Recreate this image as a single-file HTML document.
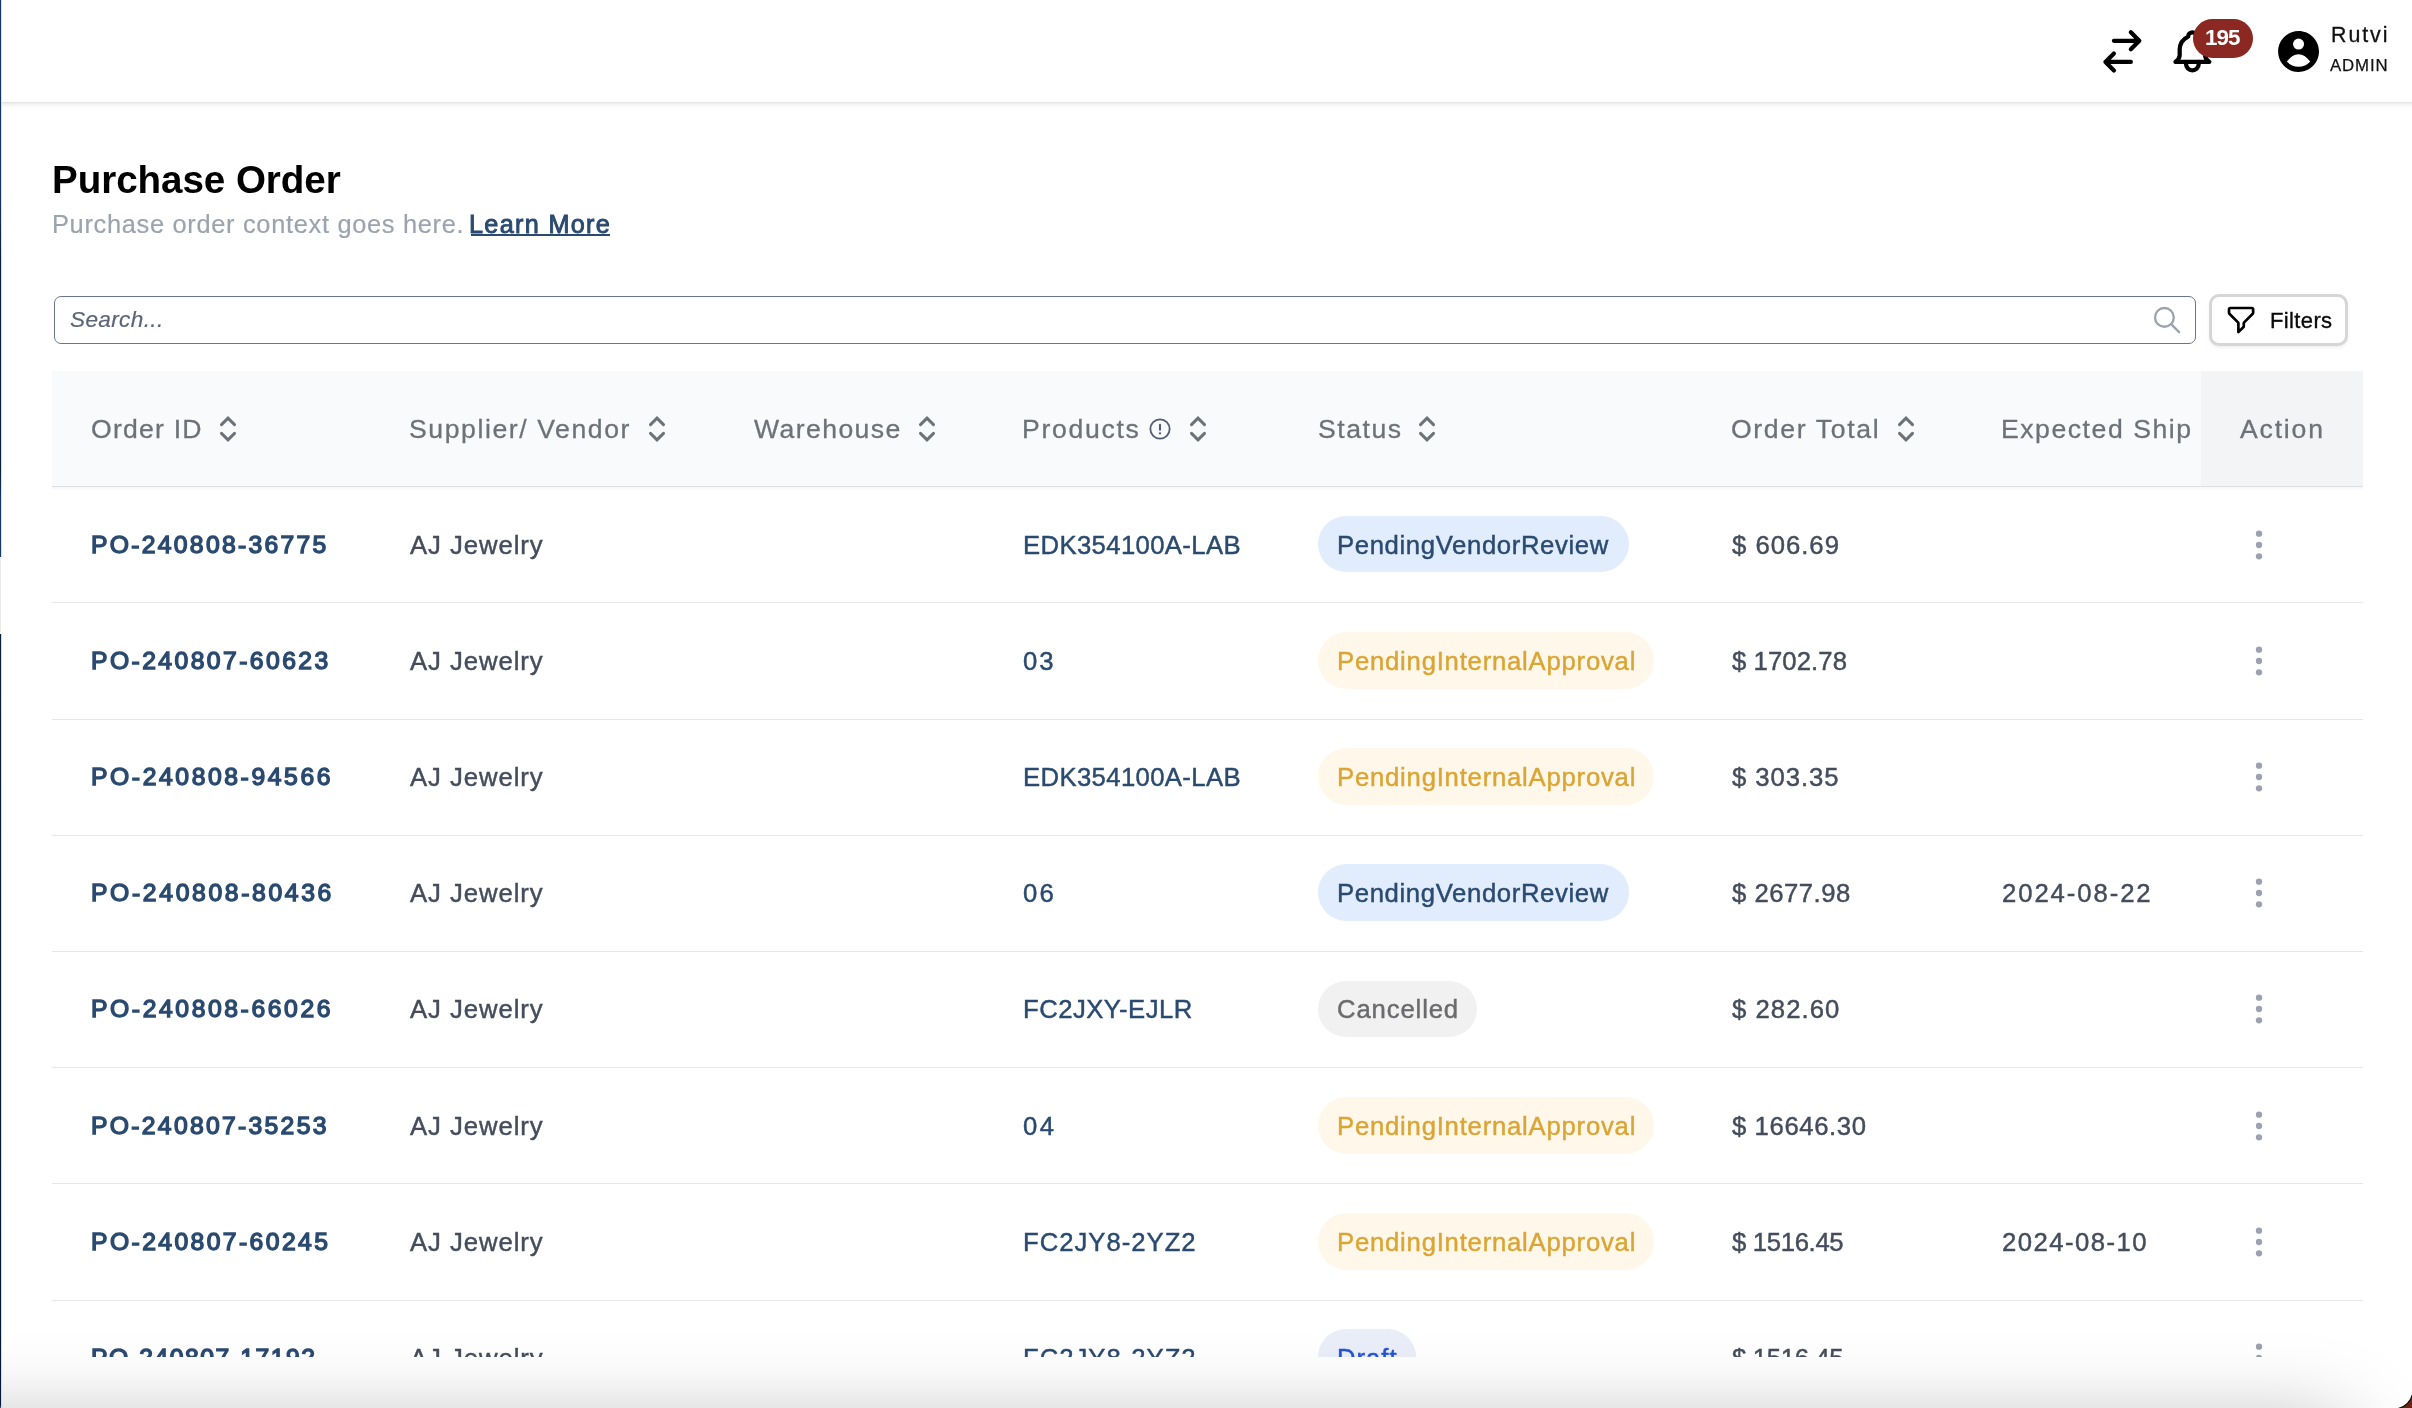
<!DOCTYPE html>
<html lang="en">
<head>
<meta charset="utf-8">
<meta name="viewport" content="width=2412">
<title>Purchase Order</title>
<style>
html,body{margin:0;padding:0;}
html{width:2412px;height:1408px;overflow:hidden;}
body{width:2412px;height:1408px;overflow:hidden;background:#fff;position:relative;font-family:"Liberation Sans",sans-serif;}
.t{position:absolute;white-space:nowrap;margin:0;padding:0;font-weight:400;display:block;will-change:transform;}
.abs{position:absolute;}
svg{position:absolute;overflow:visible;}
a.t{text-decoration:none;}
.chip{position:absolute;border-radius:40px;}
.line{position:absolute;left:52px;width:2311px;height:1px;background:#e5e7eb;}
.viewport{position:absolute;left:0;top:0;width:2412px;height:1357px;overflow:hidden;}
</style>
</head>
<body>
<aside aria-label="Sidebar">
<div class="abs" style="left:0;top:0;width:1.15px;height:1408px;background:linear-gradient(to bottom,#15365f 0,#15365f 200px,#0a1f40 260px,#0a1f40 470px,#173a63 500px,#173a63 557px,#fff 557px,#fff 558px,#e9e9e9 558px,#e9e9e9 633px,#fff 633px,#fff 634px,#0b1f40 634px,#06193a 1406px,#3a4a62 1406px);"></div>
<div class="abs" style="left:1px;top:0;width:1px;height:1408px;opacity:.16;background:linear-gradient(to bottom,#15365f 0,#15365f 557px,transparent 557px,transparent 634px,#0b1f40 634px,#06193a 1408px);"></div>
</aside>
<div class="viewport">
<header>
<div class="abs" style="left:2px;top:0;width:2410px;height:102px;background:#fff;"></div>
<div class="abs" style="left:2px;top:102px;width:2410px;height:8px;background:linear-gradient(to bottom,rgba(0,0,0,.125) 0,rgba(0,0,0,.06) 22%,rgba(0,0,0,.022) 50%,rgba(0,0,0,0) 90%);"></div>
<!-- switch account -->
<svg style="left:2096.8px;top:25.9px;" width="50.76" height="50.76" viewBox="0 0 24 24" fill="none" stroke="#000" stroke-width="2" stroke-linecap="round" stroke-linejoin="round"><path d="M8 7h12m0 0l-4-4m4 4l-4 4m0 6H4m0 0l4 4m-4-4l4-4"/></svg>
<!-- notifications -->
<svg style="left:2167.4px;top:26.0px;" width="50.76" height="50.76" viewBox="0 0 24 24" fill="none" stroke="#000" stroke-width="2" stroke-linecap="round" stroke-linejoin="round"><path d="M10 5a2 2 0 1 1 4 0a7 7 0 0 1 4 6v3a4 4 0 0 0 2 3h-16a4 4 0 0 0 2 -3v-3a7 7 0 0 1 4 -6"/><path d="M9 17v1a3 3 0 0 0 6 0v-1"/></svg>
<div class="abs" style="left:2193.2px;top:18.7px;width:59.7px;height:39.4px;border-radius:20px;background:#8c2822;"></div>
<span class="t" style="left:2205.00px;top:27.14px;font-size:22.4px;line-height:22.4px;letter-spacing:-0.953px;color:#fff;font-weight:700;">195</span>
<!-- user -->
<svg style="left:2273.96px;top:26.76px;" width="49.08" height="49.08" viewBox="0 0 24 24" fill="#000" fill-rule="evenodd"><path d="M12 2C6.48 2 2 6.48 2 12s4.48 10 10 10 10-4.48 10-10S17.52 2 12 2zM12 5.65a2.7 2.7 0 1 1 0 5.4a2.7 2.7 0 1 1 0-5.4zM6.3 16.87Q9 13.3 12 13.3Q15 13.3 17.7 16.87A7.5 7.5 0 0 1 6.3 16.87z"/></svg>
<span class="t" style="left:2331.05px;top:25.33px;font-size:21.4px;line-height:21.4px;letter-spacing:1.929px;color:#111;-webkit-text-stroke:0.3px #111;">Rutvi</span>
<span class="t" style="left:2330.32px;top:58.15px;font-size:16.8px;line-height:16.8px;letter-spacing:0.874px;color:#111;-webkit-text-stroke:0.25px #111;">ADMIN</span>
</header>
<main>
<section>
<h1 class="t" style="left:52.30px;top:160.63px;font-size:38.6px;line-height:38.6px;letter-spacing:-0.058px;color:#000;font-weight:700;">Purchase Order</h1>
<p class="t" style="left:51.90px;top:212.00px;font-size:25.4px;line-height:25.4px;letter-spacing:0.688px;color:#9ca3af;-webkit-text-stroke:0.2px #9ca3af;">Purchase order context goes here.</p>
<a class="t" style="left:469.15px;top:212.02px;font-size:25.2px;line-height:25.2px;letter-spacing:1.334px;color:#2a4a70;-webkit-text-stroke:0.9px #2a4a70;">Learn More</a>
<div class="abs" style="left:470.5px;top:234.3px;width:139px;height:2.2px;background:#2a4a70;"></div>
</section>
<div role="search">
<div class="abs" style="left:54px;top:296px;width:2140px;height:46px;border:1px solid #6b7489;border-radius:7px;background:#fff;"></div>
<span class="t" style="left:69.80px;top:309.47px;font-size:22.6px;line-height:22.6px;letter-spacing:0.345px;color:#5b6477;font-style:italic;-webkit-text-stroke:0.2px #5b6477;">Search...</span>
<svg style="left:2150.9px;top:303.5px;" width="32.16" height="32.16" viewBox="0 0 24 24" fill="none" stroke="#9ca3af" stroke-width="1.75" stroke-linecap="round" stroke-linejoin="round"><path d="M21 21l-6-6m2-5a7 7 0 11-14 0 7 7 0 0114 0z"/></svg>
</div>
<div role="button">
<div class="abs" style="left:2209px;top:294px;width:133px;height:46px;border:3px solid #d6d6d6;border-radius:10px;background:#fff;box-shadow:0 2px 3px rgba(0,0,0,.06);"></div>
<svg style="left:2224.9px;top:303.9px;" width="32.16" height="32.16" viewBox="0 0 24 24" fill="none" stroke="#000" stroke-width="2" stroke-linecap="round" stroke-linejoin="round"><path d="M3 4a1 1 0 011-1h16a1 1 0 011 1v2.586a1 1 0 01-.293.707l-6.414 6.414a1 1 0 00-.293.707V17l-4 4v-6.586a1 1 0 00-.293-.707L3.293 7.293A1 1 0 013 6.586V4z"/></svg>
<span class="t" style="left:2269.90px;top:309.78px;font-size:22.0px;line-height:22.0px;letter-spacing:0.369px;color:#0a0a0a;-webkit-text-stroke:0.35px #0a0a0a;">Filters</span>
</div>
<div role="table">
<div role="row">
<div class="abs" style="left:52px;top:371px;width:2311px;height:115px;background:#f9fafb;"></div>
<div class="abs" style="left:2201px;top:371px;width:162px;height:115px;background:#f3f4f6;"></div>
<div class="line" style="top:486px;background:#dcdfe4;"></div>
<div class="abs" style="left:52px;top:487px;width:2311px;height:4px;background:linear-gradient(to bottom,rgba(0,0,0,.03),rgba(0,0,0,0));"></div>
<span class="t" style="left:90.70px;top:416.28px;font-size:26.6px;line-height:26.6px;letter-spacing:1.221px;color:#6d7278;-webkit-text-stroke:0.3px #6d7278;">Order ID</span>
<svg style="left:218.20px;top:415.00px;" width="20" height="28" viewBox="-10 -14 20 28" fill="none" stroke="#6d7278" stroke-width="3" stroke-linecap="round" stroke-linejoin="miter"><path d="M-6.5 -4.4L0 -10.9L6.5 -4.4M-6.5 4.4L0 10.9L6.5 4.4"/></svg>
<span class="t" style="left:408.90px;top:416.28px;font-size:26.6px;line-height:26.6px;letter-spacing:1.588px;color:#6d7278;-webkit-text-stroke:0.3px #6d7278;">Supplier/ Vendor</span>
<svg style="left:647.20px;top:415.00px;" width="20" height="28" viewBox="-10 -14 20 28" fill="none" stroke="#6d7278" stroke-width="3" stroke-linecap="round" stroke-linejoin="miter"><path d="M-6.5 -4.4L0 -10.9L6.5 -4.4M-6.5 4.4L0 10.9L6.5 4.4"/></svg>
<span class="t" style="left:754.10px;top:416.28px;font-size:26.6px;line-height:26.6px;letter-spacing:1.410px;color:#6d7278;-webkit-text-stroke:0.3px #6d7278;">Warehouse</span>
<svg style="left:917.10px;top:415.00px;" width="20" height="28" viewBox="-10 -14 20 28" fill="none" stroke="#6d7278" stroke-width="3" stroke-linecap="round" stroke-linejoin="miter"><path d="M-6.5 -4.4L0 -10.9L6.5 -4.4M-6.5 4.4L0 10.9L6.5 4.4"/></svg>
<span class="t" style="left:1022.40px;top:416.28px;font-size:26.6px;line-height:26.6px;letter-spacing:1.707px;color:#6d7278;-webkit-text-stroke:0.3px #6d7278;">Products</span>
<svg style="left:1147.7px;top:416.65px;" width="24" height="24" viewBox="-12 -12 24 24" fill="none" stroke="#555d75" stroke-linecap="round"><circle cx="0" cy="0" r="9.65" stroke-width="1.8"/><path d="M0 -4.3V0.7" stroke-width="2.1"/><path d="M0 4.3V4.4" stroke-width="2.3"/></svg>
<svg style="left:1188.10px;top:415.00px;" width="20" height="28" viewBox="-10 -14 20 28" fill="none" stroke="#6d7278" stroke-width="3" stroke-linecap="round" stroke-linejoin="miter"><path d="M-6.5 -4.4L0 -10.9L6.5 -4.4M-6.5 4.4L0 10.9L6.5 4.4"/></svg>
<span class="t" style="left:1317.60px;top:416.28px;font-size:26.6px;line-height:26.6px;letter-spacing:1.541px;color:#6d7278;-webkit-text-stroke:0.3px #6d7278;">Status</span>
<svg style="left:1417.10px;top:415.00px;" width="20" height="28" viewBox="-10 -14 20 28" fill="none" stroke="#6d7278" stroke-width="3" stroke-linecap="round" stroke-linejoin="miter"><path d="M-6.5 -4.4L0 -10.9L6.5 -4.4M-6.5 4.4L0 10.9L6.5 4.4"/></svg>
<span class="t" style="left:1730.80px;top:416.28px;font-size:26.6px;line-height:26.6px;letter-spacing:1.657px;color:#6d7278;-webkit-text-stroke:0.3px #6d7278;">Order Total</span>
<svg style="left:1896.10px;top:415.00px;" width="20" height="28" viewBox="-10 -14 20 28" fill="none" stroke="#6d7278" stroke-width="3" stroke-linecap="round" stroke-linejoin="miter"><path d="M-6.5 -4.4L0 -10.9L6.5 -4.4M-6.5 4.4L0 10.9L6.5 4.4"/></svg>
<span class="t" style="left:2001.30px;top:416.28px;font-size:26.6px;line-height:26.6px;letter-spacing:1.541px;color:#6d7278;-webkit-text-stroke:0.3px #6d7278;">Expected Ship</span>
<span class="t" style="left:2240.30px;top:416.28px;font-size:26.6px;line-height:26.6px;letter-spacing:1.816px;color:#6d7278;-webkit-text-stroke:0.3px #6d7278;">Action</span>
</div>
<div role="row">
<div class="chip" style="left:1317.9px;top:515.80px;width:311.2px;height:56.5px;background:#e1edfc;"></div>
<span class="t" style="left:90.60px;top:532.99px;font-size:24.7px;line-height:24.7px;letter-spacing:2.299px;color:#2a4a70;-webkit-text-stroke:1.4px #2a4a70;">PO-240808-36775</span>
<span class="t" style="left:409.53px;top:532.97px;font-size:25.7px;line-height:25.7px;letter-spacing:0.945px;color:#444d5c;-webkit-text-stroke:0.45px #444d5c;">AJ Jewelry</span>
<span class="t" style="left:1022.72px;top:532.97px;font-size:25.7px;line-height:25.7px;letter-spacing:0.370px;color:#2a4a70;-webkit-text-stroke:0.45px #2a4a70;">EDK354100A-LAB</span>
<span class="t" style="left:1336.72px;top:532.97px;font-size:25.7px;line-height:25.7px;letter-spacing:0.633px;color:#2a4a70;-webkit-text-stroke:0.45px #2a4a70;">PendingVendorReview</span>
<span class="t" style="left:1732.42px;top:532.97px;font-size:25.7px;line-height:25.7px;letter-spacing:0.992px;color:#444d5c;-webkit-text-stroke:0.45px #444d5c;">$ 606.69</span>
<svg style="left:2253.2px;top:528.55px;" width="12" height="32" viewBox="-6 -16 12 32" fill="#9ba1b0"><circle cx="0" cy="-11.3" r="3.15"/><circle cx="0" cy="0" r="3.15"/><circle cx="0" cy="11.3" r="3.15"/></svg>
<div class="line" style="top:602px;"></div>
</div>
<div role="row">
<div class="chip" style="left:1317.9px;top:632.00px;width:336.1px;height:56.5px;background:#fff8ea;"></div>
<span class="t" style="left:90.60px;top:648.99px;font-size:24.7px;line-height:24.7px;letter-spacing:2.435px;color:#2a4a70;-webkit-text-stroke:1.4px #2a4a70;">PO-240807-60623</span>
<span class="t" style="left:409.53px;top:648.97px;font-size:25.7px;line-height:25.7px;letter-spacing:0.945px;color:#444d5c;-webkit-text-stroke:0.45px #444d5c;">AJ Jewelry</span>
<span class="t" style="left:1023.22px;top:648.97px;font-size:25.7px;line-height:25.7px;letter-spacing:1.964px;color:#2a4a70;-webkit-text-stroke:0.45px #2a4a70;">03</span>
<span class="t" style="left:1336.72px;top:648.97px;font-size:25.7px;line-height:25.7px;letter-spacing:0.774px;color:#dba535;-webkit-text-stroke:0.45px #dba535;">PendingInternalApproval</span>
<span class="t" style="left:1732.42px;top:648.97px;font-size:25.7px;line-height:25.7px;letter-spacing:0.082px;color:#444d5c;-webkit-text-stroke:0.45px #444d5c;">$ 1702.78</span>
<svg style="left:2253.2px;top:644.55px;" width="12" height="32" viewBox="-6 -16 12 32" fill="#9ba1b0"><circle cx="0" cy="-11.3" r="3.15"/><circle cx="0" cy="0" r="3.15"/><circle cx="0" cy="11.3" r="3.15"/></svg>
<div class="line" style="top:719px;"></div>
</div>
<div role="row">
<div class="chip" style="left:1317.9px;top:748.00px;width:336.1px;height:56.5px;background:#fff8ea;"></div>
<span class="t" style="left:90.60px;top:764.99px;font-size:24.7px;line-height:24.7px;letter-spacing:2.592px;color:#2a4a70;-webkit-text-stroke:1.4px #2a4a70;">PO-240808-94566</span>
<span class="t" style="left:409.53px;top:764.97px;font-size:25.7px;line-height:25.7px;letter-spacing:0.945px;color:#444d5c;-webkit-text-stroke:0.45px #444d5c;">AJ Jewelry</span>
<span class="t" style="left:1022.72px;top:764.97px;font-size:25.7px;line-height:25.7px;letter-spacing:0.370px;color:#2a4a70;-webkit-text-stroke:0.45px #2a4a70;">EDK354100A-LAB</span>
<span class="t" style="left:1336.72px;top:764.97px;font-size:25.7px;line-height:25.7px;letter-spacing:0.774px;color:#dba535;-webkit-text-stroke:0.45px #dba535;">PendingInternalApproval</span>
<span class="t" style="left:1732.42px;top:764.97px;font-size:25.7px;line-height:25.7px;letter-spacing:0.921px;color:#444d5c;-webkit-text-stroke:0.45px #444d5c;">$ 303.35</span>
<svg style="left:2253.2px;top:760.55px;" width="12" height="32" viewBox="-6 -16 12 32" fill="#9ba1b0"><circle cx="0" cy="-11.3" r="3.15"/><circle cx="0" cy="0" r="3.15"/><circle cx="0" cy="11.3" r="3.15"/></svg>
<div class="line" style="top:835px;"></div>
</div>
<div role="row">
<div class="chip" style="left:1317.9px;top:864.00px;width:311.2px;height:56.5px;background:#e1edfc;"></div>
<span class="t" style="left:90.60px;top:880.99px;font-size:24.7px;line-height:24.7px;letter-spacing:2.656px;color:#2a4a70;-webkit-text-stroke:1.4px #2a4a70;">PO-240808-80436</span>
<span class="t" style="left:409.53px;top:880.97px;font-size:25.7px;line-height:25.7px;letter-spacing:0.945px;color:#444d5c;-webkit-text-stroke:0.45px #444d5c;">AJ Jewelry</span>
<span class="t" style="left:1023.22px;top:880.97px;font-size:25.7px;line-height:25.7px;letter-spacing:2.264px;color:#2a4a70;-webkit-text-stroke:0.45px #2a4a70;">06</span>
<span class="t" style="left:1336.72px;top:880.97px;font-size:25.7px;line-height:25.7px;letter-spacing:0.633px;color:#2a4a70;-webkit-text-stroke:0.45px #2a4a70;">PendingVendorReview</span>
<span class="t" style="left:1732.42px;top:880.97px;font-size:25.7px;line-height:25.7px;letter-spacing:0.495px;color:#444d5c;-webkit-text-stroke:0.45px #444d5c;">$ 2677.98</span>
<span class="t" style="left:2002.22px;top:880.97px;font-size:25.7px;line-height:25.7px;letter-spacing:1.915px;color:#444d5c;-webkit-text-stroke:0.45px #444d5c;">2024-08-22</span>
<svg style="left:2253.2px;top:876.55px;" width="12" height="32" viewBox="-6 -16 12 32" fill="#9ba1b0"><circle cx="0" cy="-11.3" r="3.15"/><circle cx="0" cy="0" r="3.15"/><circle cx="0" cy="11.3" r="3.15"/></svg>
<div class="line" style="top:951px;"></div>
</div>
<div role="row">
<div class="chip" style="left:1317.9px;top:980.90px;width:158.7px;height:56.5px;background:#f1f1f1;"></div>
<span class="t" style="left:90.60px;top:996.99px;font-size:24.7px;line-height:24.7px;letter-spacing:2.592px;color:#2a4a70;-webkit-text-stroke:1.4px #2a4a70;">PO-240808-66026</span>
<span class="t" style="left:409.53px;top:996.97px;font-size:25.7px;line-height:25.7px;letter-spacing:0.945px;color:#444d5c;-webkit-text-stroke:0.45px #444d5c;">AJ Jewelry</span>
<span class="t" style="left:1022.72px;top:996.97px;font-size:25.7px;line-height:25.7px;letter-spacing:0.465px;color:#2a4a70;-webkit-text-stroke:0.45px #2a4a70;">FC2JXY-EJLR</span>
<span class="t" style="left:1337.12px;top:996.97px;font-size:25.7px;line-height:25.7px;letter-spacing:0.862px;color:#6a6b6d;-webkit-text-stroke:0.45px #6a6b6d;">Cancelled</span>
<span class="t" style="left:1732.42px;top:996.97px;font-size:25.7px;line-height:25.7px;letter-spacing:1.035px;color:#444d5c;-webkit-text-stroke:0.45px #444d5c;">$ 282.60</span>
<svg style="left:2253.2px;top:992.55px;" width="12" height="32" viewBox="-6 -16 12 32" fill="#9ba1b0"><circle cx="0" cy="-11.3" r="3.15"/><circle cx="0" cy="0" r="3.15"/><circle cx="0" cy="11.3" r="3.15"/></svg>
<div class="line" style="top:1067px;"></div>
</div>
<div role="row">
<div class="chip" style="left:1317.9px;top:1097.00px;width:336.1px;height:56.5px;background:#fff8ea;"></div>
<span class="t" style="left:90.60px;top:1113.99px;font-size:24.7px;line-height:24.7px;letter-spacing:2.306px;color:#2a4a70;-webkit-text-stroke:1.4px #2a4a70;">PO-240807-35253</span>
<span class="t" style="left:409.53px;top:1113.97px;font-size:25.7px;line-height:25.7px;letter-spacing:0.945px;color:#444d5c;-webkit-text-stroke:0.45px #444d5c;">AJ Jewelry</span>
<span class="t" style="left:1023.22px;top:1113.97px;font-size:25.7px;line-height:25.7px;letter-spacing:2.464px;color:#2a4a70;-webkit-text-stroke:0.45px #2a4a70;">04</span>
<span class="t" style="left:1336.72px;top:1113.97px;font-size:25.7px;line-height:25.7px;letter-spacing:0.774px;color:#dba535;-webkit-text-stroke:0.45px #dba535;">PendingInternalApproval</span>
<span class="t" style="left:1732.42px;top:1113.97px;font-size:25.7px;line-height:25.7px;letter-spacing:0.597px;color:#444d5c;-webkit-text-stroke:0.45px #444d5c;">$ 16646.30</span>
<svg style="left:2253.2px;top:1109.55px;" width="12" height="32" viewBox="-6 -16 12 32" fill="#9ba1b0"><circle cx="0" cy="-11.3" r="3.15"/><circle cx="0" cy="0" r="3.15"/><circle cx="0" cy="11.3" r="3.15"/></svg>
<div class="line" style="top:1183px;"></div>
</div>
<div role="row">
<div class="chip" style="left:1317.9px;top:1213.00px;width:336.1px;height:56.5px;background:#fff8ea;"></div>
<span class="t" style="left:90.60px;top:1229.99px;font-size:24.7px;line-height:24.7px;letter-spacing:2.413px;color:#2a4a70;-webkit-text-stroke:1.4px #2a4a70;">PO-240807-60245</span>
<span class="t" style="left:409.53px;top:1229.97px;font-size:25.7px;line-height:25.7px;letter-spacing:0.945px;color:#444d5c;-webkit-text-stroke:0.45px #444d5c;">AJ Jewelry</span>
<span class="t" style="left:1022.72px;top:1229.97px;font-size:25.7px;line-height:25.7px;letter-spacing:0.989px;color:#2a4a70;-webkit-text-stroke:0.45px #2a4a70;">FC2JY8-2YZ2</span>
<span class="t" style="left:1336.72px;top:1229.97px;font-size:25.7px;line-height:25.7px;letter-spacing:0.774px;color:#dba535;-webkit-text-stroke:0.45px #dba535;">PendingInternalApproval</span>
<span class="t" style="left:1732.42px;top:1229.97px;font-size:25.7px;line-height:25.7px;letter-spacing:-0.330px;color:#444d5c;-webkit-text-stroke:0.45px #444d5c;">$ 1516.45</span>
<span class="t" style="left:2002.22px;top:1229.97px;font-size:25.7px;line-height:25.7px;letter-spacing:1.460px;color:#444d5c;-webkit-text-stroke:0.45px #444d5c;">2024-08-10</span>
<svg style="left:2253.2px;top:1225.55px;" width="12" height="32" viewBox="-6 -16 12 32" fill="#9ba1b0"><circle cx="0" cy="-11.3" r="3.15"/><circle cx="0" cy="0" r="3.15"/><circle cx="0" cy="11.3" r="3.15"/></svg>
<div class="line" style="top:1300px;"></div>
</div>
<div role="row">
<div class="chip" style="left:1317.9px;top:1328.70px;width:98.2px;height:56.5px;background:#e9eef9;"></div>
<span class="t" style="left:90.60px;top:1345.99px;font-size:24.7px;line-height:24.7px;letter-spacing:1.485px;color:#2a4a70;-webkit-text-stroke:1.4px #2a4a70;">PO-240807-17192</span>
<span class="t" style="left:409.53px;top:1345.97px;font-size:25.7px;line-height:25.7px;letter-spacing:0.945px;color:#444d5c;-webkit-text-stroke:0.45px #444d5c;">AJ Jewelry</span>
<span class="t" style="left:1022.72px;top:1345.97px;font-size:25.7px;line-height:25.7px;letter-spacing:0.989px;color:#2a4a70;-webkit-text-stroke:0.45px #2a4a70;">FC2JY8-2YZ2</span>
<span class="t" style="left:1336.52px;top:1345.97px;font-size:25.7px;line-height:25.7px;letter-spacing:0.981px;color:#2453d4;-webkit-text-stroke:0.45px #2453d4;">Draft</span>
<span class="t" style="left:1732.42px;top:1345.97px;font-size:25.7px;line-height:25.7px;letter-spacing:-0.330px;color:#444d5c;-webkit-text-stroke:0.45px #444d5c;">$ 1516.45</span>
<svg style="left:2253.2px;top:1341.55px;" width="12" height="32" viewBox="-6 -16 12 32" fill="#9ba1b0"><circle cx="0" cy="-11.3" r="3.15"/><circle cx="0" cy="0" r="3.15"/><circle cx="0" cy="11.3" r="3.15"/></svg>
<div class="line" style="top:1416px;"></div>
</div>
</div>
</main>
</div>
<div class="abs" style="left:2px;top:1290px;width:2410px;height:118px;overflow:hidden;pointer-events:none;"><div class="abs" style="left:-300px;top:130px;width:2645px;height:120px;box-shadow:0 0 83px 0 rgba(0,0,0,.262);"></div></div>
<svg style="left:2388px;top:1384px;overflow:hidden;" width="24" height="24" viewBox="2388 1384 24 24"><path d="M2413.3 1389.2A20 20 0 0 1 2393.3 1409.2H2414V1389.2Z" fill="#6b2314"/><path d="M2413.3 1389.2A20 20 0 0 1 2393.3 1409.2" fill="none" stroke="#1a0805" stroke-width="1.3"/></svg>
</body>
</html>
